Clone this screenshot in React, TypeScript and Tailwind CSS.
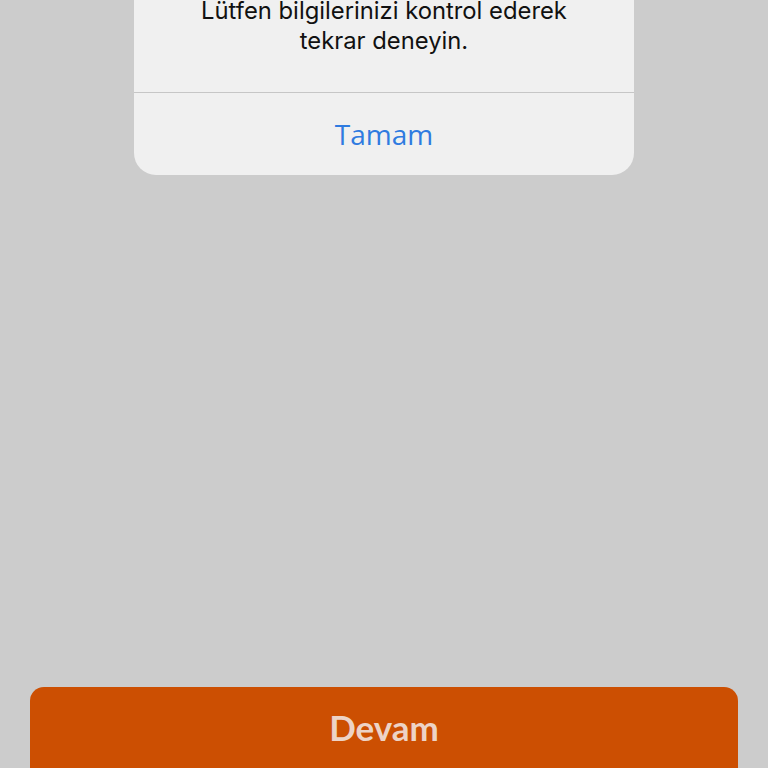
export default function App() {
  return (
    <div className="w-[768px] h-[768px] overflow-hidden bg-[#cccccc] flex flex-col font-['Inter',sans-serif]">
      <div className="mx-auto -mt-[4px] w-[500px] bg-[#f0f0f0] rounded-b-[22px] flex flex-col">
        <div className="pb-[36px] text-center text-[23.8px] leading-[30px] text-[#111111]">
          <div>Lütfen bilgilerinizi kontrol ederek</div>
          <div>tekrar deneyin.</div>
        </div>
        <div className="h-px bg-[#c6c6c6]" />
        <div className="h-[82px] flex items-center justify-center text-[28px] text-[#2f7be0] font-['Open_Sans',sans-serif]">
          Tamam
        </div>
      </div>
      <div className="mt-[512px] mx-[30px] h-[110px] shrink-0 rounded-[14px] bg-[#cc4f02] flex items-start justify-center pt-[14px]">
        <span className="text-[35px] font-bold text-[#edd3c6] font-['Lato',sans-serif]">Devam</span>
      </div>
    </div>
  );
}
